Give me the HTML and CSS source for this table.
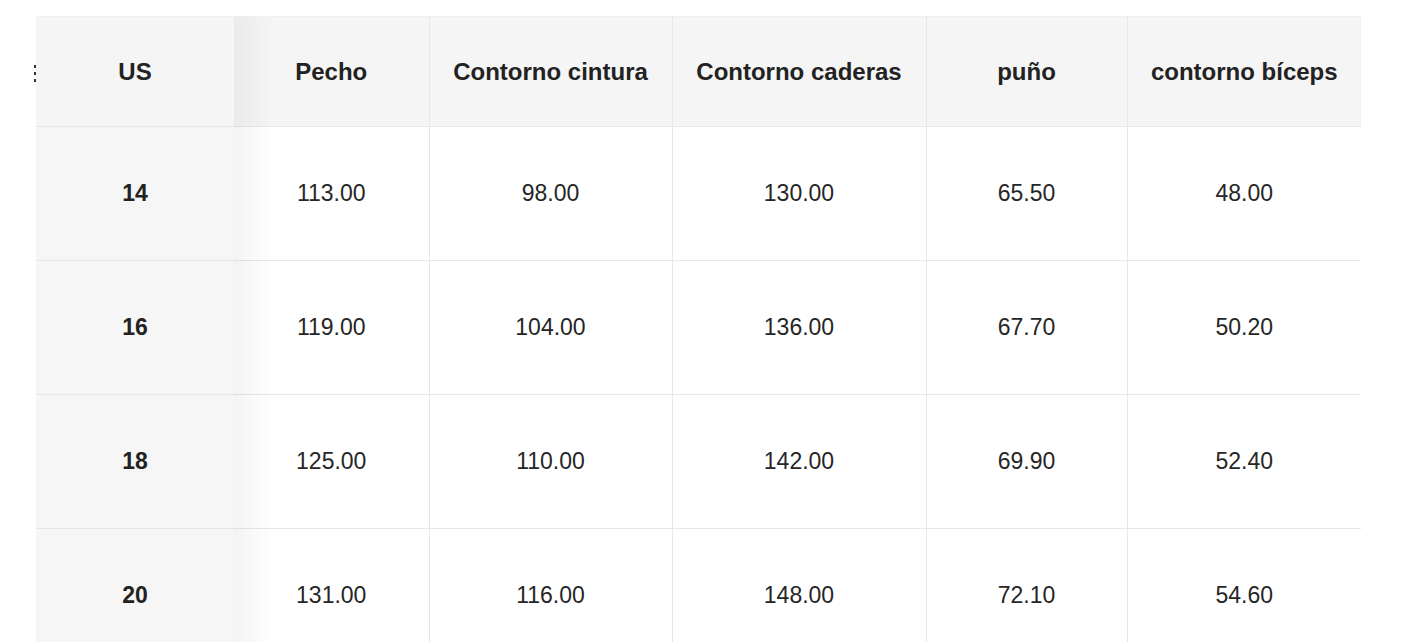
FILE: index.html
```html
<!DOCTYPE html>
<html lang="es">
<head>
<meta charset="utf-8">
<title>Tabla de tallas</title>
<link rel="stylesheet" href="styles.css">
</head>
<body>
<div class="wrap">
  <span class="clip-edge"></span>
  <table class="size-table">
    <colgroup>
      <col class="c1"><col class="c2"><col class="c3"><col class="c4"><col class="c5"><col class="c6">
    </colgroup>
    <thead>
      <tr>
        <th class="fixed">US</th>
        <th>Pecho</th>
        <th>Contorno cintura</th>
        <th>Contorno caderas</th>
        <th>puño</th>
        <th>contorno bíceps</th>
      </tr>
    </thead>
    <tbody>
      <tr><td class="fixed">14</td><td>113.00</td><td>98.00</td><td>130.00</td><td>65.50</td><td>48.00</td></tr>
      <tr><td class="fixed">16</td><td>119.00</td><td>104.00</td><td>136.00</td><td>67.70</td><td>50.20</td></tr>
      <tr><td class="fixed">18</td><td>125.00</td><td>110.00</td><td>142.00</td><td>69.90</td><td>52.40</td></tr>
      <tr><td class="fixed">20</td><td>131.00</td><td>116.00</td><td>148.00</td><td>72.10</td><td>54.60</td></tr>
    </tbody>
  </table>
</div>
</body>
</html>
```
FILE: styles.css
```css
html, body {
  margin: 0;
  padding: 0;
  background: #ffffff;
}
body {
  font-family: "Liberation Sans", Arial, Helvetica, sans-serif;
  color: #262626;
  overflow: hidden;
}
.wrap {
  position: relative;
  padding: 16px 0 0 36px;
}
.clip-edge {
  position: absolute;
  left: 34px;
  top: 65px;
  width: 2px;
  height: 17px;
  background: linear-gradient(to bottom,
    #333 0, #333 3px, transparent 3px, transparent 7px,
    #333 7px, #333 10px, transparent 10px, transparent 14px,
    #333 14px, #333 17px);
}
.size-table {
  border-collapse: collapse;
  table-layout: fixed;
  width: 1325px;
}
.c1 { width: 198px; }
.c2 { width: 195px; }
.c3 { width: 243px; }
.c4 { width: 254px; }
.c5 { width: 201px; }
.c6 { width: 234px; }

.size-table th,
.size-table td {
  text-align: center;
  vertical-align: middle;
  border: 1px solid #e7e7e7;
  padding: 0;
}
.size-table tr > :first-child { border-left: none; }
.size-table tr > :last-child { border-right: none; }
.size-table th {
  height: 109px;
  background: #f5f5f5;
  font-size: 24px;
  font-weight: bold;
  color: #222;
  border-top: 1px solid #f0f0f0;
}
.size-table td {
  height: 133px;
  font-size: 23px;
  font-weight: normal;
}
.size-table td.fixed {
  font-weight: bold;
  background: #f6f6f6;
  font-size: 23px;
  color: #222;
}
.size-table .fixed {
  position: relative;
  border-right: none;
}
.size-table .fixed::after {
  content: "";
  position: absolute;
  top: 0;
  bottom: -1px;
  left: 100%;
  width: 42px;
  background: linear-gradient(to right, rgba(0,0,0,0.045), rgba(0,0,0,0));
  pointer-events: none;
}
.size-table tr > :nth-child(2) { border-left: none; }
```
